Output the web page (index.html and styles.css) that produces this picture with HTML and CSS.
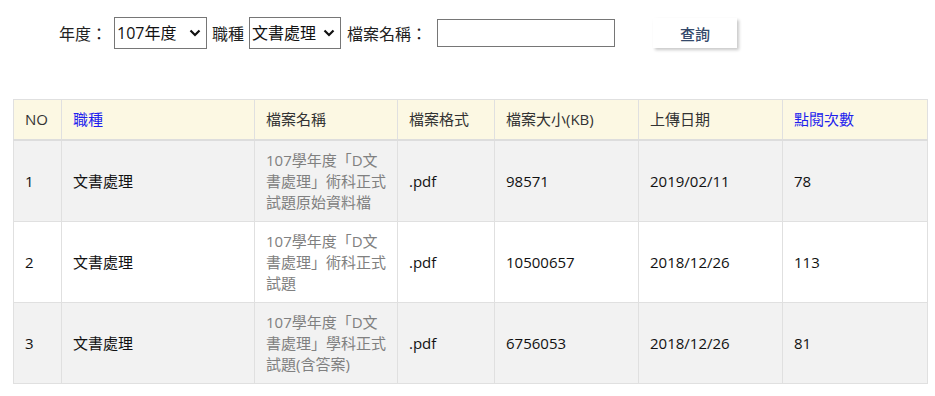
FILE: index.html
```html
<!DOCTYPE html>
<html lang="zh-Hant">
<head>
<meta charset="utf-8">
<title>檔案查詢</title>
<link rel="stylesheet" href="styles.css">
</head>
<body>
<div class="page">
  <form class="toolbar">
    <label class="lbl lbl-year">年度：</label>
    <span class="sel sel-year">
      <select><option>107年度</option></select>
      <svg class="chev" width="12" height="8" viewBox="0 0 12 8"><path d="M1.5 1.5 L6 6 L10.5 1.5" fill="none" stroke="#111" stroke-width="2.2"/></svg>
    </span>
    <label class="lbl lbl-job">職種</label>
    <span class="sel sel-job">
      <select><option>文書處理</option></select>
      <svg class="chev" width="12" height="8" viewBox="0 0 12 8"><path d="M1.5 1.5 L6 6 L10.5 1.5" fill="none" stroke="#111" stroke-width="2.2"/></svg>
    </span>
    <label class="lbl lbl-name">檔案名稱：</label>
    <input class="txt" type="text">
    <button class="btn" type="button">查詢</button>
  </form>

  <table class="grid">
    <colgroup>
      <col class="c-no"><col class="c-job"><col class="c-name"><col class="c-fmt"><col class="c-size"><col class="c-date"><col class="c-hit">
    </colgroup>
    <thead>
      <tr>
        <th>NO</th>
        <th class="link">職種</th>
        <th>檔案名稱</th>
        <th>檔案格式</th>
        <th>檔案大小(KB)</th>
        <th>上傳日期</th>
        <th class="link">點閱次數</th>
      </tr>
    </thead>
    <tbody>
      <tr class="odd">
        <td>1</td><td>文書處理</td><td class="fname">107學年度「D文書處理」術科正式試題原始資料檔</td><td>.pdf</td><td>98571</td><td>2019/02/11</td><td>78</td>
      </tr>
      <tr>
        <td>2</td><td>文書處理</td><td class="fname">107學年度「D文書處理」術科正式試題</td><td>.pdf</td><td>10500657</td><td>2018/12/26</td><td>113</td>
      </tr>
      <tr class="odd">
        <td>3</td><td>文書處理</td><td class="fname">107學年度「D文書處理」學科正式試題(含答案)</td><td>.pdf</td><td>6756053</td><td>2018/12/26</td><td>81</td>
      </tr>
    </tbody>
  </table>
</div>
</body>
</html>
```
FILE: styles.css
```css
html, body {
  margin: 0;
  padding: 0;
  background: #fff;
}
body {
  font-family: "Open Sans", "Noto Sans CJK TC", sans-serif;
  color: #222;
}
.page {
  padding: 17px 8px 0 13px;
}
.toolbar {
  display: flex;
  align-items: center;
  height: 32px;
  padding-left: 46px;
  font-size: 16px;
}
.lbl {
  color: #222;
  white-space: nowrap;
}
.lbl-year { margin-right: 7px; }
.lbl-job { margin: 0 5px 0 5px; }
.lbl-name { margin: 0 10px 0 6px; }
.sel {
  position: relative;
  display: inline-block;
}
.sel select {
  appearance: none;
  -webkit-appearance: none;
  font-family: "Open Sans", "Noto Sans CJK TC", sans-serif;
  font-size: 16px;
  color: #111;
  height: 32px;
  border: 1px solid #767676;
  border-radius: 0;
  background: #fff;
  padding: 0 0 0 2px;
  margin: 0;
}
.sel-year select { width: 93px; }
.sel-job select { width: 92px; }
.chev {
  position: absolute;
  right: 6px;
  top: 12px;
  pointer-events: none;
}
.txt {
  width: 178px;
  height: 28px;
  box-sizing: border-box;
  border: 1px solid #767676;
  margin: 0;
  padding: 0 4px;
  font-size: 15px;
}
.btn {
  margin-left: 38px;
  width: 84px;
  height: 30px;
  border: none;
  background: #fff;
  box-shadow: 2px 2px 3px rgba(0, 0, 0, 0.22);
  font-family: "Open Sans", "Noto Sans CJK TC", sans-serif;
  font-size: 15px;
  font-weight: 500;
  color: #34496b;
  padding: 0;
}

.grid {
  margin-top: 50px;
  width: 914px;
  border-collapse: collapse;
  table-layout: fixed;
  font-size: 15px;
  line-height: 21px;
  border: 1px solid #ddd;
}
.c-no { width: 48px; }
.c-job { width: 193px; }
.c-name { width: 143px; }
.c-fmt { width: 97px; }
.c-size { width: 144px; }
.c-date { width: 144px; }
.c-hit { width: 145px; }

.grid th, .grid td {
  border: 1px solid #e0e0e0;
  text-align: left;
  vertical-align: middle;
  padding: 0 9px 0 11px;
}
.grid th {
  background: #fcf8e3;
  color: #333;
  font-weight: normal;
  height: 39px;
  border-bottom: 2px solid #ddd;
}
.grid th.link {
  color: #1f1fee;
}
.grid td {
  height: 80px;
  color: #111;
}
.grid tr.odd td {
  background: #f2f2f2;
}
.grid td.fname {
  color: #808080;
}
```
